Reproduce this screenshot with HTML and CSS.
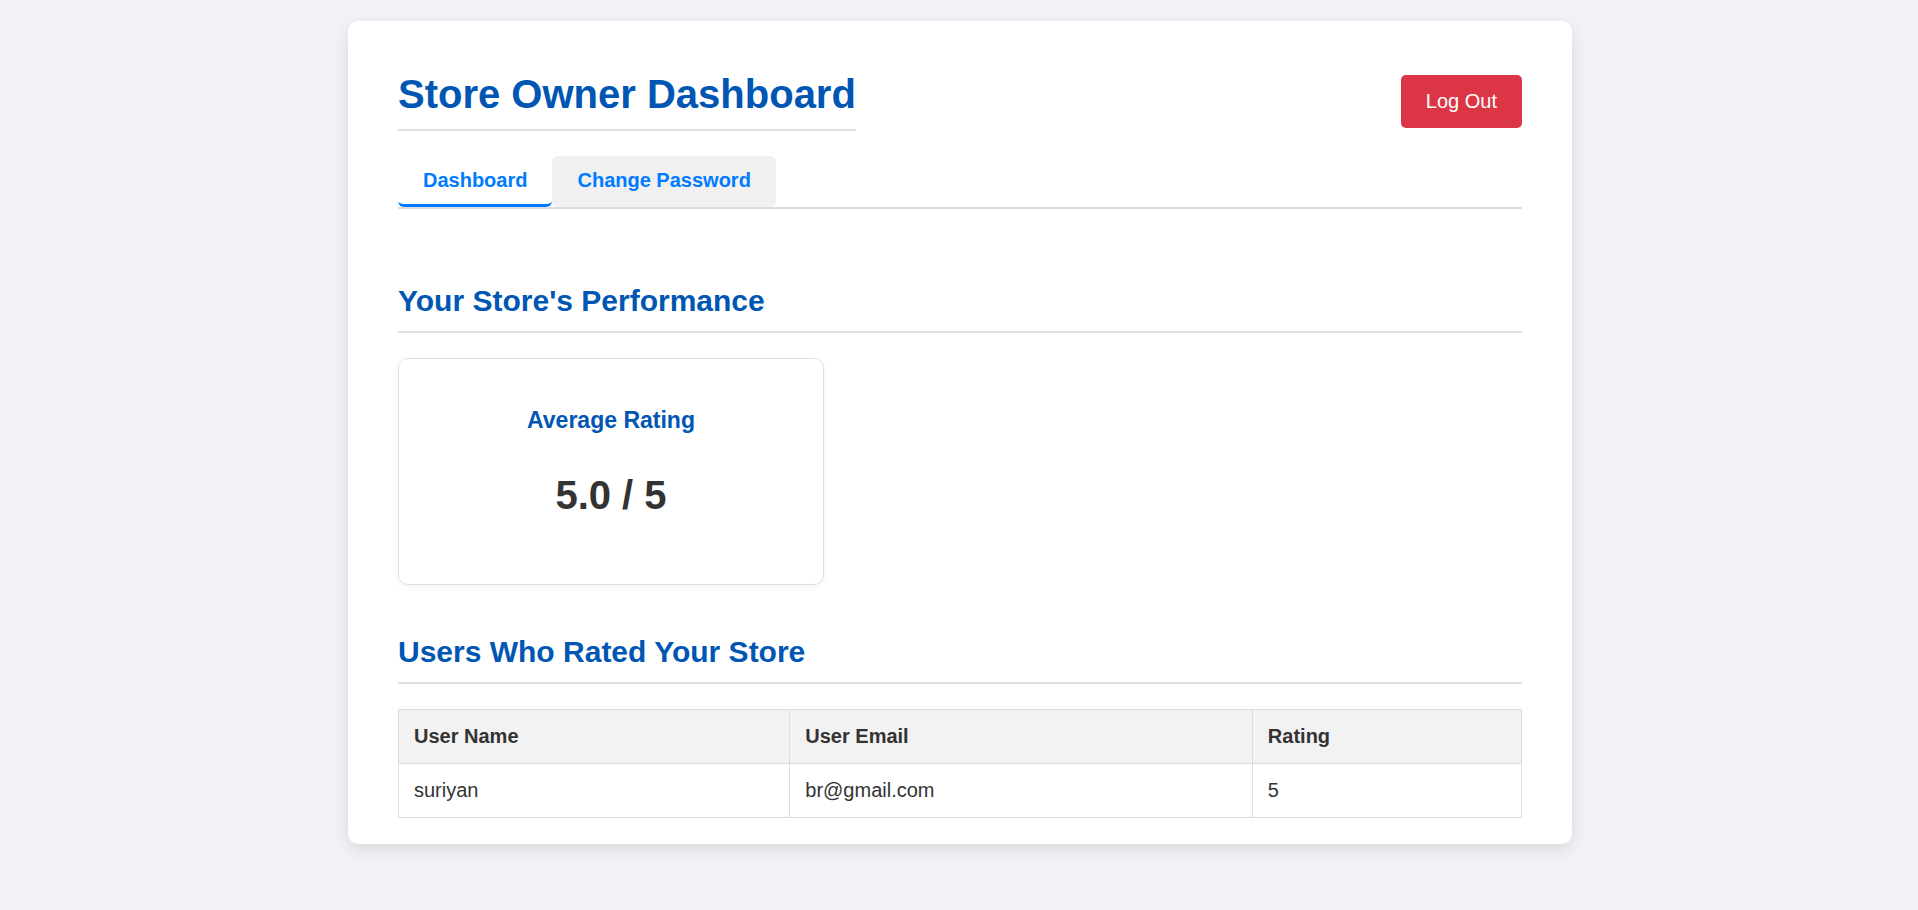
FILE: index.html
```html
<!DOCTYPE html>
<html lang="en">
<head>
<meta charset="utf-8">
<title>Store Owner Dashboard</title>
<link rel="stylesheet" href="styles.css">
</head>
<body>
<div class="card">
  <header class="header">
    <h1 class="page-title">Store Owner Dashboard</h1>
    <button class="logout-btn">Log Out</button>
  </header>
  <nav class="tabs">
    <button class="tab tab-active">Dashboard</button>
    <button class="tab tab-inactive">Change Password</button>
  </nav>
  <section>
    <h2 class="section-title">Your Store's Performance</h2>
    <div class="stat-card">
      <h3 class="stat-label">Average Rating</h3>
      <p class="stat-value">5.0 / 5</p>
    </div>
  </section>
  <section>
    <h2 class="section-title">Users Who Rated Your Store</h2>
    <table class="ratings-table">
      <thead>
        <tr><th>User Name</th><th>User Email</th><th>Rating</th></tr>
      </thead>
      <tbody>
        <tr><td>suriyan</td><td>br@gmail.com</td><td>5</td></tr>
      </tbody>
    </table>
  </section>
</div>
</body>
</html>
```
FILE: styles.css
```css
* { box-sizing: border-box; }
html, body { margin: 0; }
body {
  background: #f0f2f5;
  font-family: "Liberation Sans", Arial, Helvetica, sans-serif;
  color: #333;
  padding: 21px 0 40px 2px;
}
.card {
  width: 1224px;
  margin: 0 auto;
  background: #fff;
  border-radius: 10px;
  box-shadow: 0 5px 15px rgba(0, 0, 0, 0.1);
  padding: 51px 50px 26px;
}
.header {
  display: flex;
  justify-content: space-between;
  align-items: center;
  margin-bottom: 25px;
}
.page-title {
  margin: 0;
  font-size: 40px;
  font-weight: bold;
  color: #0056b3;
  padding-bottom: 12px;
  border-bottom: 2px solid #e0e0e0;
}
.logout-btn {
  font-family: inherit;
  font-size: 20px;
  color: #fff;
  background: #dc3545;
  border: none;
  border-radius: 5px;
  padding: 15px 25px;
  line-height: normal;
}
.tabs {
  display: flex;
  border-bottom: 2px solid #ddd;
  margin-bottom: 75px;
}
.tab {
  font-family: inherit;
  font-size: 20px;
  font-weight: bold;
  color: #007bff;
  background: transparent;
  border: none;
  border-bottom: 3px solid transparent;
  border-radius: 6px;
  padding: 13px 25px 12px;
  line-height: normal;
}
.tab-active { border-bottom-color: #007bff; }
.tab-inactive { background: #f0f0f0; }
.section-title {
  margin: 50px 0 25px;
  font-size: 30px;
  font-weight: bold;
  color: #0056b3;
  padding-bottom: 13px;
  border-bottom: 2px solid #e0e0e0;
}
.stat-card {
  width: 426px;
  border: 1px solid #e0e0e0;
  border-radius: 10px;
  box-shadow: 0 2px 5px rgba(0, 0, 0, 0.05);
  text-align: center;
  padding: 48px 20px 66px;
}
.stat-label {
  margin: 0 0 39px;
  font-size: 23px;
  font-weight: bold;
  color: #0056b3;
}
.stat-value {
  margin: 0;
  font-size: 40px;
  font-weight: bold;
  color: #333;
}
.ratings-table {
  width: 100%;
  border-collapse: collapse;
  font-size: 20px;
  color: #333;
}
.ratings-table th,
.ratings-table td {
  border: 1px solid #ddd;
  padding: 15px;
  text-align: left;
}
.ratings-table th {
  background: #f2f2f2;
  font-weight: bold;
}
```
